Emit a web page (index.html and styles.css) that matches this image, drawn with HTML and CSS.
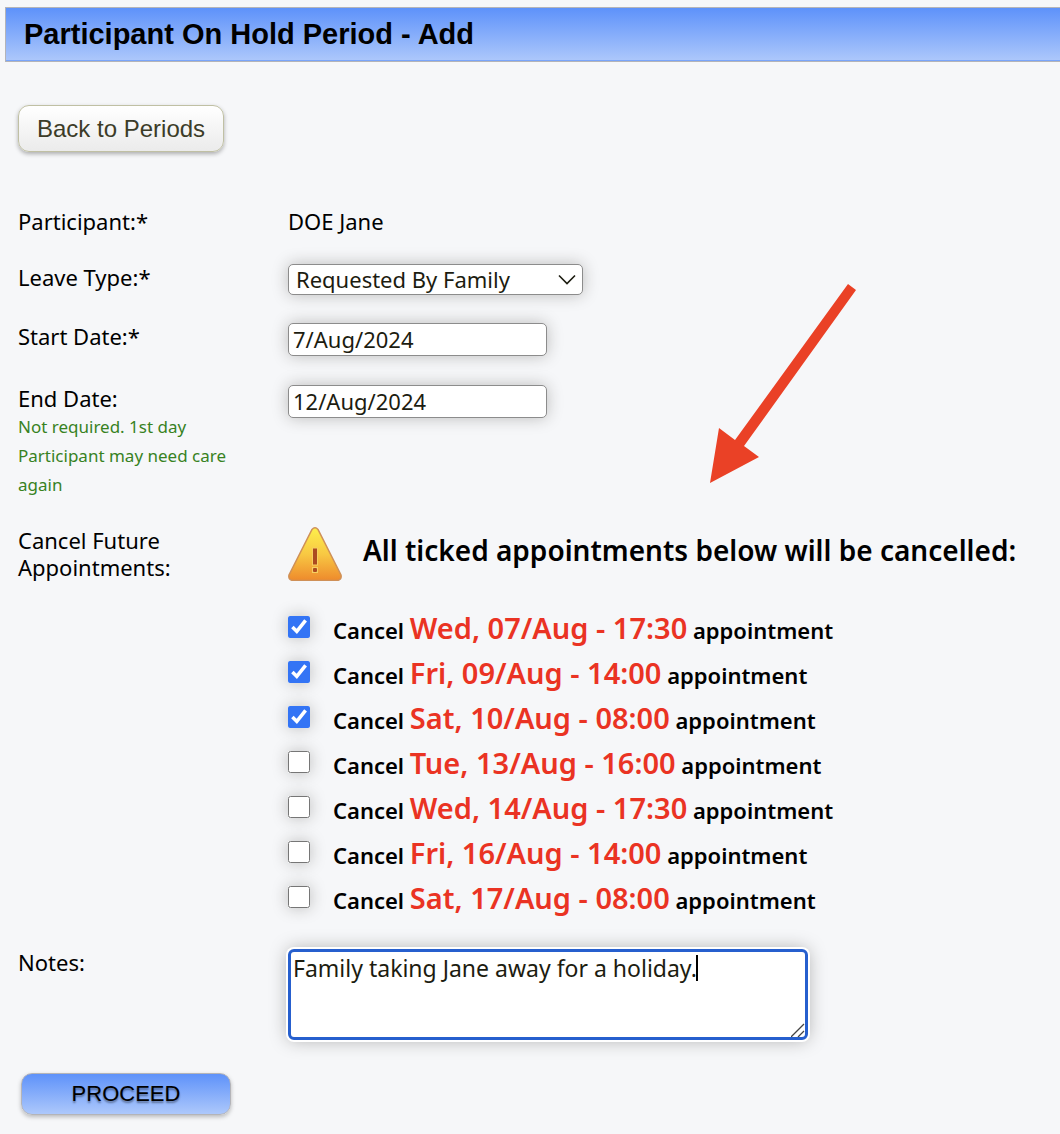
FILE: index.html
```html
<!DOCTYPE html>
<html lang="en">

<head>
	<title>Participant On Hold Period - Add</title>
	<meta charset="UTF-8">
	<meta name="viewport" content="width=device-width, initial-scale=1">
	<link rel="stylesheet" href="styles.css">
</head>

<body>
	<h1 class="title-bar">Participant On Hold Period - Add</h1>

	<div class="content">
		<button type="button" class="btn btn-back">Back to Periods</button>

		<form class="hold-form">
			<div class="row">
				<div class="label">Participant:*</div>
				<div class="field">DOE Jane</div>
			</div>

			<div class="row">
				<label class="label" for="leaveType">Leave Type:*</label>
				<div class="field">
					<div class="select-wrap">
						<select id="leaveType" class="control">
							<option selected>Requested By Family</option>
						</select>
						<svg class="chevron" viewBox="0 0 18 12" width="18" height="12" aria-hidden="true">
							<path d="M1 1.500l8 8 8-8" fill="none" stroke="#1c1c10" stroke-width="1.600" />
						</svg>
					</div>
				</div>
			</div>

			<div class="row">
				<label class="label" for="startDate">Start Date:*</label>
				<div class="field">
					<input type="text" id="startDate" class="control date" value="7/Aug/2024">
				</div>
			</div>

			<div class="row">
				<div class="label">
					<label for="endDate">End Date:</label>
					<div class="hint">Not required. 1st day Participant may need care again</div>
				</div>
				<div class="field">
					<input type="text" id="endDate" class="control date" value="12/Aug/2024">
				</div>
			</div>

			<div class="row">
				<div class="label">Cancel Future Appointments:</div>
				<div class="field">
					<div class="warning">
						<svg viewBox="0 0 54 54" width="54" height="54" aria-hidden="true">
							<defs>
								<linearGradient id="warn" x1="0" y1="0" x2="0" y2="1">
									<stop offset="0" stop-color="#fdf04c" />
									<stop offset="0.5" stop-color="#f8c843" />
									<stop offset="1" stop-color="#ee8a2c" />
								</linearGradient>
							</defs>
							<path d="M24 2.5Q27-1 30 2.5L53 48Q54 53 49 53.5H5Q0 53 1 48Z" fill="url(#warn)" stroke="#cf9058" stroke-width="1.5" />
							<rect x="24" y="20.500" width="6" height="18" fill="#f6cf61" />
							<rect x="24" y="40" width="6" height="6" fill="#f6cf61" />
							<rect x="25" y="21.500" width="4" height="16" fill="#ab4a20" />
							<rect x="25" y="41" width="4" height="4" rx="1" fill="#ab4a20" />
						</svg>
						<strong>All ticked appointments below will be cancelled:</strong>
					</div>
					<div class="appointments">
						<label><input type="checkbox" checked><span>Cancel <b>Wed, 07/Aug - 17:30</b> appointment</span></label>
						<label><input type="checkbox" checked><span>Cancel <b>Fri, 09/Aug - 14:00</b> appointment</span></label>
						<label><input type="checkbox" checked><span>Cancel <b>Sat, 10/Aug - 08:00</b> appointment</span></label>
						<label><input type="checkbox"><span>Cancel <b>Tue, 13/Aug - 16:00</b> appointment</span></label>
						<label><input type="checkbox"><span>Cancel <b>Wed, 14/Aug - 17:30</b> appointment</span></label>
						<label><input type="checkbox"><span>Cancel <b>Fri, 16/Aug - 14:00</b> appointment</span></label>
						<label><input type="checkbox"><span>Cancel <b>Sat, 17/Aug - 08:00</b> appointment</span></label>
					</div>
				</div>
			</div>

			<div class="row">
				<label class="label" for="notes">Notes:</label>
				<div class="field">
					<div class="notes-wrap">
						<textarea id="notes">Family taking Jane away for a holiday.</textarea>
						<i class="caret"></i>
						<svg class="grip" viewBox="0 0 14 14" width="14" height="14" aria-hidden="true">
							<path d="M0 14L13 1M7 14L13 8" fill="none" stroke="#444" stroke-width="1.300" />
						</svg>
					</div>
				</div>
			</div>

			<button type="submit" class="btn btn-proceed">PROCEED</button>
		</form>
	</div>

	<!-- arrow pointing at the cancellation warning -->
	<svg class="arrow" viewBox="0 0 146 200" width="146" height="200" aria-hidden="true">
		<path d="M138 0L146 6L34 162L49 173L0 199L9 144L25 156Z" fill="#ea4126" />
	</svg>
</body>

</html>
```
FILE: styles.css
```css
* {
	box-sizing: border-box;
}

body {
	position: relative;
	margin: 0;
	padding: 7px 0 19px 5px;
	background: #f6f7f9;
	color: #000;
	font: 22px/27px "Noto Sans", sans-serif;
}

.title-bar {
	margin: 0;
	padding: 0 18px;
	border: 1px solid #b4b4b8;
	border-right: 0;
	box-shadow: inset 0 -1px #7aa5fa;
	background: linear-gradient(#5e92fa, #adc8fb);
	font: bold 29px/53px "Liberation Sans", Arial, sans-serif;
}

.content {
	padding: 43px 13px 0;
}

.btn {
	display: block;
	font-family: "Liberation Sans", Arial, sans-serif;
	cursor: pointer;
}

.btn-back {
	height: 47px;
	padding: 0 18px;
	border: 1px solid #c0c0a4;
	border-radius: 11px;
	background: linear-gradient(#fff, #ebebeb);
	box-shadow: 0 2px 4px rgba(0, 0, 0, 0.3);
	color: #3c3c28;
	font-size: 24px;
}

.hold-form {
	display: flex;
	flex-direction: column;
	gap: 28px;
	margin-top: 56px;
}

.row {
	display: flex;
	min-height: 28px;
}

.label {
	flex: 0 0 270px;
	padding-right: 50px;
}

.field {
	flex: 1;
	min-width: 0;
}

.hint {
	color: #38821f;
	font-size: 17px;
	line-height: 29px;
}

.control {
	display: block;
	border: 1px solid #8c8c8c;
	border-radius: 5px;
	background: #fff;
	box-shadow: 0 0 16px #bbb;
	color: #1c1c10;
	font: inherit;
}

.date {
	width: 259px;
	height: 33px;
	margin-bottom: 1px;
	padding: 0 4px 2px;
}

.select-wrap {
	position: relative;
	width: 295px;
}

select.control {
	width: 100%;
	height: 31px;
	padding: 0 7px;
	appearance: none;
}

.chevron {
	position: absolute;
	top: 10px;
	right: 7px;
	pointer-events: none;
}

.warning {
	display: flex;
	gap: 21px;
	margin-bottom: 23px;
	font-size: 28px;
	line-height: 46px;
}

.warning svg {
	flex: none;
}

.warning strong {
	font-weight: 600;
}

.appointments {
	margin-bottom: 2px;
}

.appointments label {
	display: flex;
	align-items: center;
	gap: 23px;
	height: 45px;
	font-weight: 600;
}

.appointments span {
	padding-top: 4px;
}

.appointments input {
	flex: none;
	width: 22px;
	height: 22px;
	margin: 0;
	border-radius: 4px;
	accent-color: #3374f5;
	box-shadow: 0 0 16px #bbb;
}

.appointments b {
	color: #ea3323;
	font-size: 29px;
	font-weight: 600;
}

.notes-wrap {
	position: relative;
	max-width: 520px;
}

textarea {
	display: block;
	width: 100%;
	height: 91px;
	padding: 3px 2px;
	border: 3px solid #265fce;
	border-radius: 6px;
	outline: 0;
	background: #fff;
	box-shadow: 0 0 0 2px #fff, 0 0 18px #aaa;
	color: #1c1c10;
	font: inherit;
	font-size: 23px;
	resize: none;
}

.caret {
	position: absolute;
	top: 6px;
	left: 408px;
	width: 2px;
	height: 26px;
	background: #000;
}

.grip {
	position: absolute;
	right: 3px;
	bottom: 3px;
}

.btn-proceed {
	width: 210px;
	height: 42px;
	margin: 5px 3px 0;
	border: 1px solid #b4b4b8;
	border-radius: 11px;
	background: linear-gradient(#5e92fa, #adc8fb);
	box-shadow: 0 2px 4px rgba(0, 0, 0, 0.25);
	color: #000;
	font-size: 22px;
	text-shadow: 0 2px 2px rgba(0, 0, 0, 0.4);
}

.arrow {
	position: absolute;
	top: 284px;
	left: 710px;
	pointer-events: none;
}
```
